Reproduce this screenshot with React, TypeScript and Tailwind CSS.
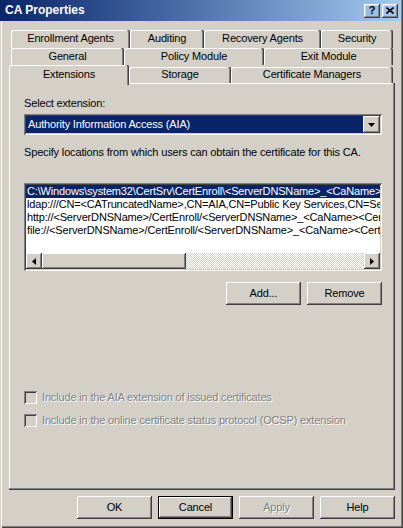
import React from 'react';

const raised = 'shadow-[inset_-1px_-1px_#404040,inset_1px_1px_#fff,inset_-2px_-2px_#808080,inset_2px_2px_#d4d0c8]';
const sunken = 'shadow-[inset_1px_1px_#808080,inset_-1px_-1px_#fff,inset_2px_2px_#404040,inset_-2px_-2px_#d4d0c8]';
const tabEdge = 'shadow-[inset_-1px_0_#404040,inset_-2px_0_#808080,inset_1px_1px_#fff]';
const disabledText = 'text-[#808080] [text-shadow:1px_1px_0_#fff]';

const Tab: React.FC<{ label: string; width: string; h?: string }> = ({ label, width, h = 'h-full' }) => (
  <div className={`${width} ${h} ${tabEdge} rounded-t-[2px] flex items-center justify-center pb-px`}>
    {label}
  </div>
);

const Button: React.FC<{ label: string; isDefault?: boolean; disabled?: boolean; className?: string }> = ({
  label,
  isDefault,
  disabled,
  className = '',
}) => (
  <div
    className={`w-[75px] h-[23px] flex items-center justify-center ${className} ${
      isDefault ? 'border border-black shadow-[inset_-1px_-1px_#404040,inset_1px_1px_#fff,inset_-2px_-2px_#808080]' : raised
    } ${disabled ? disabledText : ''}`}
  >
    {label}
  </div>
);

const Arrow: React.FC<{ dir: 'left' | 'right' | 'down' }> = ({ dir }) => {
  if (dir === 'down') {
    return (
      <svg width="7" height="4" viewBox="0 0 7 4">
        <path d="M0 0h7L3.5 4z" fill="#000" />
      </svg>
    );
  }
  return (
    <svg width="4" height="7" viewBox="0 0 4 7">
      <path d={dir === 'left' ? 'M4 0v7L0 3.5z' : 'M0 0v7L4 3.5z'} fill="#000" />
    </svg>
  );
};

const Checkbox: React.FC<{ label: string; className?: string }> = ({ label, className = '' }) => (
  <div className={`flex items-center gap-[5px] h-[13px] ${className}`}>
    <div className={`w-[13px] h-[13px] ${sunken} bg-[#d4d0c8]`} />
    <span className={`${disabledText} leading-[13px]`}>{label}</span>
  </div>
);

const locations = [
  'C:\\Windows\\system32\\CertSrv\\CertEnroll\\<ServerDNSName>_<CaName><CertificateName>.crt',
  'ldap:///CN=<CATruncatedName>,CN=AIA,CN=Public Key Services,CN=Services,<ConfigurationContainer>',
  'http://<ServerDNSName>/CertEnroll/<ServerDNSName>_<CaName><CertificateName>.crt',
  'file://<ServerDNSName>/CertEnroll/<ServerDNSName>_<CaName><CertificateName>.crt',
];

export default function App() {
  return (
    <div className="w-[403px] h-[528px] overflow-hidden flex flex-col bg-[#d4d0c8] text-black text-[11px] leading-[13px] tracking-[-0.16px] font-['Liberation_Sans',Arial,sans-serif] shadow-[inset_1px_0_#d4d0c8,inset_2px_0_#fff,inset_-1px_-1px_#404040,inset_-2px_-2px_#808080]">
      {/* Title bar */}
      <div className="h-[21px] mr-[2px] flex items-center bg-linear-to-r from-[#0a246a] to-[#a6caf0] pl-[5px] pr-[3px]">
        <span className="text-white font-bold text-[12px] tracking-normal flex-1">CA Properties</span>
        <div className={`w-[16px] h-[14px] ${raised} flex items-center justify-center font-bold text-[11px] leading-none`}>?</div>
        <div className={`w-[16px] h-[14px] ml-[2px] ${raised} flex items-center justify-center`}>
          <svg width="8" height="7" viewBox="0 0 8 7">
            <path d="M0.5 0.5l7 6M7.5 0.5l-7 6" stroke="#000" strokeWidth="1.6" />
          </svg>
        </div>
      </div>

      {/* Tabs */}
      <div className="mt-[9px] pl-[11px] flex flex-col">
        <div className="flex h-[18px]">
          <Tab label="Enrollment Agents" width="w-[119px]" />
          <Tab label="Auditing" width="w-[74px]" />
          <Tab label="Recovery Agents" width="w-[117px]" />
          <Tab label="Security" width="w-[72px]" />
        </div>
        <div className="flex h-[17px]">
          <Tab label="General" width="w-[113px]" />
          <Tab label="Policy Module" width="w-[140px]" />
          <Tab label="Exit Module" width="w-[129px]" />
        </div>
        <div className="flex h-[18px] items-end -ml-[2px]">
          <div className="relative z-10 w-[120px] h-[20px] -mb-[2px] bg-[#d4d0c8] shadow-[inset_-1px_0_#404040,inset_-2px_0_#808080,inset_1px_1px_#fff] rounded-t-[2px] flex justify-center pt-[3px]">
            Extensions
          </div>
          <Tab label="Storage" width="w-[102px]" h="h-[16px]" />
          <Tab label="Certificate Managers" width="w-[162px]" h="h-[16px]" />
        </div>
      </div>

      {/* Panel */}
      <div className="ml-[9px] w-[386px] h-[407px] shadow-[inset_-1px_-1px_#404040,inset_-2px_-2px_#808080,inset_1px_1px_#fff] pt-[14px] pl-[15px] pr-[13px] flex flex-col">
        <div>Select extension:</div>
        <div className={`mt-[4px] h-[21px] ${sunken} bg-white p-[2px] flex`}>
          <div className="flex-1 bg-[#0a246a] text-white pl-[2px] flex items-center">Authority Information Access (AIA)</div>
          <div className={`w-[17px] ${raised} bg-[#d4d0c8] flex items-center justify-center`}>
            <Arrow dir="down" />
          </div>
        </div>
        <div className="mt-[11px]">Specify locations from which users can obtain the certificate for this CA.</div>

        <div className={`mt-[24px] h-[88px] ${sunken} bg-white p-[2px] flex flex-col`}>
          <div className="flex-1 overflow-hidden">
            {locations.map((loc, i) => (
              <div
                key={loc}
                className={`h-[13px] pl-[1px] whitespace-nowrap ${i === 0 ? 'bg-[#0a246a] text-white' : ''}`}
              >
                {loc}
              </div>
            ))}
          </div>
          <div className="h-[16px] flex">
            <div className={`w-[16px] ${raised} bg-[#d4d0c8] flex items-center justify-center`}>
              <Arrow dir="left" />
            </div>
            <div className="flex-1 flex bg-[image:repeating-conic-gradient(#fff_0_25%,#d4d0c8_0_50%)] bg-[length:2px_2px]">
              <div className={`w-[144px] ${raised} bg-[#d4d0c8]`} />
            </div>
            <div className={`w-[16px] ${raised} bg-[#d4d0c8] flex items-center justify-center`}>
              <Arrow dir="right" />
            </div>
          </div>
        </div>

        <div className="mt-[11px] flex justify-end gap-[6px]">
          <Button label="Add..." />
          <Button label="Remove" />
        </div>

        <Checkbox label="Include in the AIA extension of issued certificates" className="mt-[86px]" />
        <Checkbox label="Include in the online certificate status protocol (OCSP) extension" className="mt-[10px]" />
      </div>

      {/* Dialog buttons */}
      <div className="mt-[6px] pl-[77px] flex gap-[6px]">
        <Button label="OK" />
        <Button label="Cancel" isDefault />
        <Button label="Apply" disabled />
        <Button label="Help" />
      </div>
    </div>
  );
}
